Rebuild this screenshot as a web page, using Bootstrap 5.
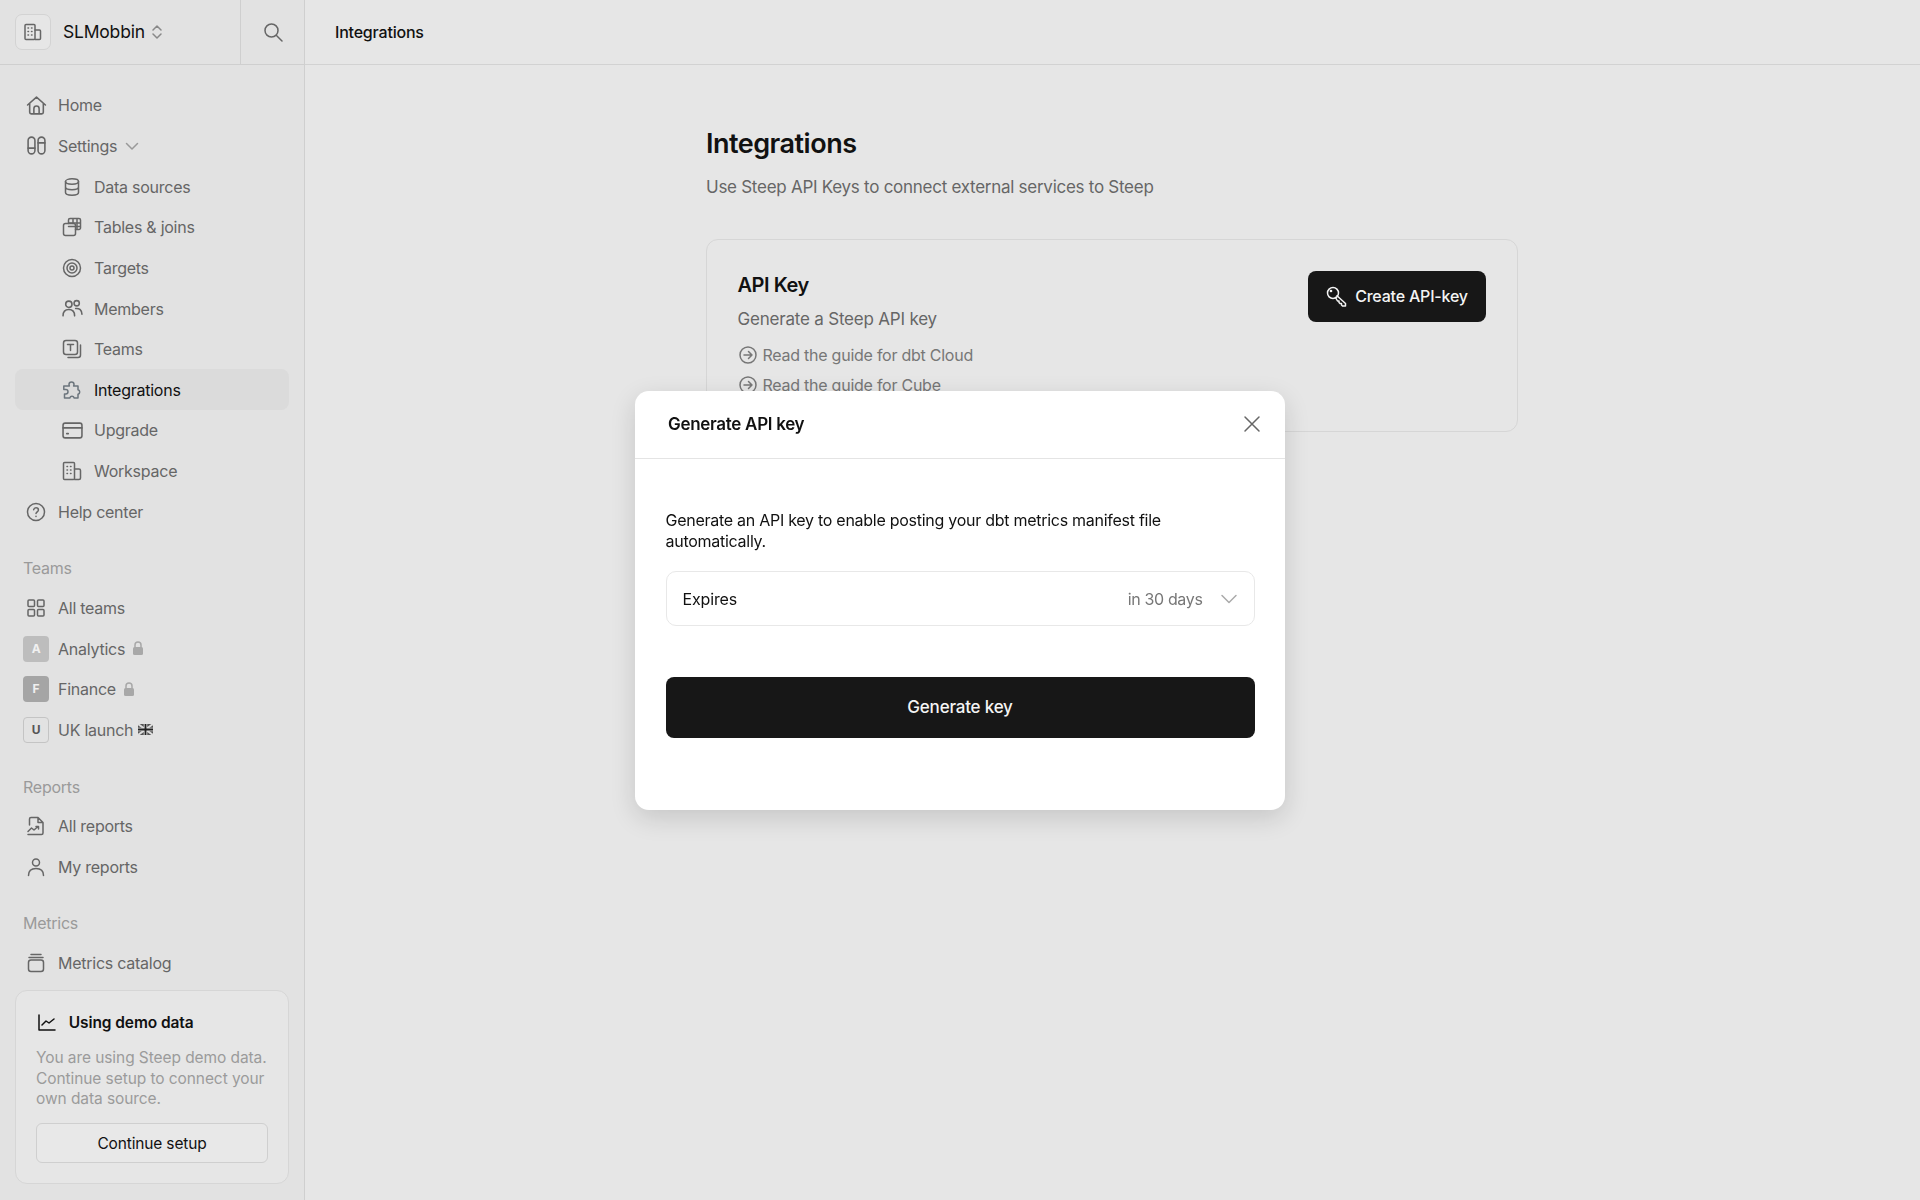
<!DOCTYPE html>
<html lang="en">
<head>
  <meta charset="UTF-8">
  <meta name="viewport" content="width=device-width, initial-scale=1">
  <title>Integrations</title>
  <link href="https://cdn.jsdelivr.net/npm/bootstrap@5.3.3/dist/css/bootstrap.min.css" rel="stylesheet">
  <style>
    body { font-family: Inter, "Liberation Sans", sans-serif; font-size: 16px; background: #e6e6e6; color: #111; height: 100vh; overflow: hidden; }
    svg { fill: none; stroke: currentColor; stroke-width: 1.5; stroke-linecap: round; stroke-linejoin: round; flex-shrink: 0; }

    .side { width: 305px; background: #e2e2e2; border-right: 1px solid #cfcfcf; height: 100vh; }
    .side-top { height: 65px; border-bottom: 1px solid #cfcfcf; }
    .org { width: 241px; padding-left: 15px; border-right: 1px solid #cfcfcf; }
    .org-logo { width: 36px; height: 36px; border: 1px solid #d3d3d3; border-radius: 7px; background: #e6e6e6; color: #666; }
    .org-name { font-size: 17.5px; letter-spacing: -.2px; margin-left: 12px; margin-right: 6px; }
    .search-btn { width: 63px; color: #666; }
    .stepper { color: #888; }

    .side-nav { padding: 20px 15px 0; }
    .nav-row { height: 40.65px; padding-left: 10px; color: #666; border-radius: 8px; text-decoration: none; letter-spacing: -.25px; }
    .nav-row.sub { padding-left: 46px; }
    .nav-row.on { background: #dbdbdb; color: #111; }
    .nav-ico { width: 22px; margin-right: 11px; }
    .nav-head { height: 40.65px; margin-top: 15px; padding: 2px 0 0 8px; color: #9a9a9a; letter-spacing: -.25px; }
    .tile { width: 26px; height: 26px; margin: 0 -2px; border-radius: 4px; font-size: 12px; font-weight: 700; color: #f0f0f0; }
    .tile-a { background: #bdbdbd; }
    .tile-f { background: #a5a5a5; }
    .tile-u { background: transparent; border: 1px solid #c4c4c4; color: #555; }
    .lock { color: #a8a8a8; margin-left: 7px; }
    .flag { margin-left: 5px; }

    .demo { margin: auto 15px 16px; height: 194px; padding: 20px; background: #e6e6e6; border: 1px solid #d6d6d6; border-radius: 12px; }
    .demo-title { font-weight: 600; font-size: 15.5px; letter-spacing: -.1px; }
    .demo-title svg { margin-left: 1px; }
    .demo-text { color: #9b9b9b; font-size: 15.5px; line-height: 20.4px; letter-spacing: -.08px; margin: 14px 0 14px; }
    .demo-btn { height: 40px; font-size: 15.5px; letter-spacing: -.15px; color: #111; background: #e8e8e8; border: 1px solid #cfcfcf; border-radius: 6px; }

    .main-top { height: 65px; border-bottom: 1px solid #d2d2d2; padding-left: 30px; font-weight: 500; letter-spacing: -.2px; }
    .main-wrap { width: 813px; margin: 0 auto; padding: 60px 1px 0 0; }
    .page-title { font-size: 27px; font-weight: 600; letter-spacing: -.5px; line-height: 38px; margin: 0; }
    .page-sub { font-size: 17px; color: #666; letter-spacing: -.27px; line-height: 24px; margin: 12px 0 0; }
    .api-box { height: 193px; margin-top: 40px; padding: 31px 31px 31px 30.5px; background: transparent; border: 1.5px solid #d6d6d6; border-radius: 12px; }
    .api-title { font-size: 20px; font-weight: 600; letter-spacing: -.45px; line-height: 28px; margin: 0; }
    .api-sub { font-size: 17px; color: #666; letter-spacing: -.2px; line-height: 24px; margin: 8px 0 9px; }
    .guide { color: #777; height: 30px; font-size: 16px; letter-spacing: -.25px; }
    .guide svg { margin-right: 6px; margin-left: 1px; }
    .key-btn { height: 51px; width: 178px; padding-bottom: 2px; background: #171717; color: #f4f4f4; border: 0; border-radius: 8px; font-size: 16px; font-weight: 500; letter-spacing: -.2px; }

    .modal.shown { display: block; }
    .key-dialog { max-width: 650px; margin: 0 auto; min-height: 100vh; }
    .key-modal { height: 419px; border: 0; border-radius: 14px; box-shadow: 0 8px 26px rgba(0, 0, 0, .14); }
    .key-head { height: 68px; padding: 0 24px 0 33px; border-bottom: 1px solid #e4e4e4; }
    .key-title { font-size: 17px; font-weight: 600; letter-spacing: -.3px; margin: 0; padding-top: 1px; }
    .key-close { color: #666; }
    .key-body { padding: 51.5px 30.5px 0; }
    .key-text { line-height: 20.5px; letter-spacing: -.27px; margin: 0 0 20px; }
    .expire { height: 55px; padding: 0 16px; border: 1.5px solid #e8e8e8; border-radius: 10px; letter-spacing: -.15px; }
    .expire-val { color: #777; margin-right: 17px; letter-spacing: -.35px; }
    .expire svg { color: #aaa; }
    .gen-btn { height: 61px; margin-top: 51px; padding: 0; background: #171717; color: #f4f4f4; border: 0; border-radius: 8px; font-size: 17px; font-weight: 500; letter-spacing: -.2px; }
  </style>
</head>
<body>
  <div class="d-flex">
    <!-- Sidebar -->
    <aside class="side d-flex flex-column flex-shrink-0">
      <div class="side-top d-flex">
        <div class="org d-flex align-items-center">
          <div class="org-logo d-flex align-items-center justify-content-center">
            <svg width="20" height="20" viewBox="0 0 20 20" stroke-width="1.3"><rect x="2" y="2.500" width="10" height="15" rx="1"/><path d="M12 8h4.500a1 1 0 0 1 1 1v7.500a1 1 0 0 1-1 1H12M5 6h.5M8.500 6H9M5 9.500h.5M8.500 9.500H9M5 13h.5M8.500 13H9"/></svg>
          </div>
          <span class="org-name">SLMobbin</span>
          <svg class="stepper" width="12" height="18" viewBox="0 0 12 18"><path d="M2 7l4-4 4 4M2 11l4 4 4-4"/></svg>
        </div>
        <div class="search-btn d-flex align-items-center justify-content-center">
          <svg width="20" height="20" viewBox="0 0 20 20"><circle cx="8.500" cy="8.500" r="6.500"/><path d="M13.500 13.500L19 19"/></svg>
        </div>
      </div>

      <nav class="side-nav d-flex flex-column">
        <a class="nav-row d-flex align-items-center" href="#"><span class="nav-ico d-flex justify-content-center"><svg width="21" height="21" viewBox="0 0 20 20"><path d="M1.500 9.500L10 2l8.500 7.500M3.500 8v8.500a1.500 1.500 0 0 0 1.500 1.500h10a1.500 1.500 0 0 0 1.500-1.500V8M7.500 18v-5a2.500 2.500 0 0 1 5 0v5"/></svg></span>Home</a>
        <a class="nav-row d-flex align-items-center" href="#"><span class="nav-ico d-flex justify-content-center"><svg width="21" height="21" viewBox="0 0 20 20"><rect x="2" y="2" width="6.500" height="16" rx="3.250"/><rect x="11.500" y="2" width="6.500" height="16" rx="3.250"/><path d="M2 12.500h6.500M11.500 7.500H18"/></svg></span>Settings<svg class="ms-2" width="14" height="14" viewBox="0 0 14 14"><path d="M1.500 4.500L7 10l5.500-5.500" stroke="#999"/></svg></a>
        <a class="nav-row sub d-flex align-items-center" href="#"><span class="nav-ico d-flex justify-content-center"><svg width="20" height="20" viewBox="0 0 20 20"><ellipse cx="10" cy="4.500" rx="6.500" ry="2.700"/><path d="M3.500 4.500v11c0 1.500 3 2.700 6.500 2.700s6.500-1.200 6.500-2.700v-11M3.500 10c0 1.500 3 2.700 6.500 2.700s6.500-1.200 6.500-2.700"/></svg></span>Data sources</a>
        <a class="nav-row sub d-flex align-items-center" href="#"><span class="nav-ico d-flex justify-content-center"><svg width="20" height="20" viewBox="0 0 20 20" stroke-width="1.400"><path d="M6.500 6.500V3a1.500 1.500 0 0 1 1.500-1.500h9A1.500 1.500 0 0 1 18.500 3v8a1.500 1.500 0 0 1-1.500 1.500h-3.500M6.500 6h12M6.500 9.500h12M11 1.500v5M15 1.500v11"/><rect x="1.500" y="6.500" width="12" height="12" rx="2"/></svg></span>Tables &amp; joins</a>
        <a class="nav-row sub d-flex align-items-center" href="#"><span class="nav-ico d-flex justify-content-center"><svg width="20" height="20" viewBox="0 0 20 20"><circle cx="10" cy="10" r="8.500"/><circle cx="10" cy="10" r="5"/><circle cx="10" cy="10" r="2"/></svg></span>Targets</a>
        <a class="nav-row sub d-flex align-items-center" href="#"><span class="nav-ico d-flex justify-content-center"><svg width="21" height="21" viewBox="0 0 20 20"><circle cx="6.500" cy="6" r="3"/><circle cx="14" cy="5" r="2.500"/><path d="M1 17c0-4 2.500-6 5.500-6s5.500 2 5.500 6M13 10c3.500-.5 6 1.500 6 5.500"/></svg></span>Members</a>
        <a class="nav-row sub d-flex align-items-center" href="#"><span class="nav-ico d-flex justify-content-center"><svg width="20" height="20" viewBox="0 0 20 20" stroke-width="1.400"><rect x="1.500" y="1.500" width="14" height="14" rx="2.500"/><path d="M18.500 6v10a2.500 2.500 0 0 1-2.500 2.500H6M5.500 5.500h6M8.500 5.500v6"/></svg></span>Teams</a>
        <a class="nav-row sub on d-flex align-items-center" href="#"><span class="nav-ico d-flex justify-content-center text-secondary"><svg width="20" height="20" viewBox="0 0 20 20" stroke-width="1.400"><path d="M7 4.500a2.500 2.500 0 0 1 5 0c0 .5-.2 1-.4 1.500H16v3.700a2.400 2.400 0 0 1 0 4.600V18h-3.800a2.300 2.300 0 0 0-4.400 0H2.500v-4h1.300a2.200 2.200 0 0 0 0-4.400H1.800V6h5.600C7.200 5.500 7 5 7 4.500z"/></svg></span>Integrations</a>
        <a class="nav-row sub d-flex align-items-center" href="#"><span class="nav-ico d-flex justify-content-center"><svg width="21" height="21" viewBox="0 0 20 20"><rect x="1" y="3" width="18" height="14" rx="2"/><path d="M1 7.500h18M4.500 13h1.500"/></svg></span>Upgrade</a>
        <a class="nav-row sub d-flex align-items-center" href="#"><span class="nav-ico d-flex justify-content-center"><svg width="20" height="20" viewBox="0 0 20 20" stroke-width="1.400"><rect x="1.500" y="1.500" width="11" height="17" rx="1"/><path d="M12.500 8h4.500a1.500 1.500 0 0 1 1.500 1.500v7.500a1.500 1.500 0 0 1-1.500 1.500h-4.500M5 5.500h.5M8.500 5.500H9M5 9h.5M8.500 9H9M5 12.500h.5M8.500 12.500H9"/></svg></span>Workspace</a>
        <a class="nav-row d-flex align-items-center" href="#"><span class="nav-ico d-flex justify-content-center"><svg width="20" height="20" viewBox="0 0 20 20"><circle cx="10" cy="10" r="8.500"/><path d="M7.700 7.700A2.400 2.400 0 0 1 10 5.800c1.400 0 2.400.9 2.400 2.100 0 1.900-2.400 1.900-2.400 3.700M10 14.300v.2"/></svg></span>Help center</a>

        <div class="nav-head d-flex align-items-center">Teams</div>
        <a class="nav-row d-flex align-items-center" href="#"><span class="nav-ico d-flex justify-content-center"><svg width="20" height="20" viewBox="0 0 20 20"><rect x="2" y="2" width="6.500" height="6.500" rx="1"/><rect x="11.500" y="2" width="6.500" height="6.500" rx="1"/><rect x="2" y="11.500" width="6.500" height="6.500" rx="1"/><rect x="11.500" y="11.500" width="6.500" height="6.500" rx="1"/></svg></span>All teams</a>
        <a class="nav-row d-flex align-items-center" href="#"><span class="nav-ico d-flex justify-content-center"><span class="tile tile-a d-flex align-items-center justify-content-center flex-shrink-0">A</span></span>Analytics<svg class="lock" width="12" height="15" viewBox="0 0 12 15"><rect x="1" y="6" width="10" height="8" rx="1.500" fill="currentColor" stroke="none"/><path d="M3 6V4a3 3 0 0 1 6 0v2"/></svg></a>
        <a class="nav-row d-flex align-items-center" href="#"><span class="nav-ico d-flex justify-content-center"><span class="tile tile-f d-flex align-items-center justify-content-center flex-shrink-0">F</span></span>Finance<svg class="lock" width="12" height="15" viewBox="0 0 12 15"><rect x="1" y="6" width="10" height="8" rx="1.500" fill="currentColor" stroke="none"/><path d="M3 6V4a3 3 0 0 1 6 0v2"/></svg></a>
        <a class="nav-row d-flex align-items-center" href="#"><span class="nav-ico d-flex justify-content-center"><span class="tile tile-u d-flex align-items-center justify-content-center flex-shrink-0">U</span></span>UK launch<svg class="flag" width="15" height="11" viewBox="0 0 15 11" stroke-linecap="butt"><rect width="15" height="11" fill="#555" stroke="none"/><path d="M0 0l15 11M15 0L0 11" stroke="#ddd" stroke-width="2"/><path d="M7.500 0v11M0 5.500h15" stroke="#ddd" stroke-width="3.500"/><path d="M7.500 0v11M0 5.500h15" stroke="#222" stroke-width="1.800"/></svg></a>

        <div class="nav-head d-flex align-items-center">Reports</div>
        <a class="nav-row d-flex align-items-center" href="#"><span class="nav-ico d-flex justify-content-center"><svg width="20" height="20" viewBox="0 0 20 20" stroke-width="1.400"><path d="M3.500 9V3a1.500 1.500 0 0 1 1.500-1.500h7l5 5V17a1.500 1.500 0 0 1-1.500 1.500H2M12 1.500V6.500h5M2 15.500l3.500-3.500 2.500 2 4-3.500M10 10.500h2.500V13"/></svg></span>All reports</a>
        <a class="nav-row d-flex align-items-center" href="#"><span class="nav-ico d-flex justify-content-center"><svg width="20" height="20" viewBox="0 0 20 20"><circle cx="10" cy="5.500" r="3.500"/><path d="M2.500 18.500c0-4.500 3-7 7.500-7s7.500 2.500 7.500 7"/></svg></span>My reports</a>

        <div class="nav-head d-flex align-items-center">Metrics</div>
        <a class="nav-row d-flex align-items-center" href="#"><span class="nav-ico d-flex justify-content-center"><svg width="20" height="20" viewBox="0 0 20 20"><rect x="2.500" y="7" width="15" height="11.500" rx="2.500"/><path d="M3 4.500h14M5 1.500h10"/></svg></span>Metrics catalog</a>
      </nav>

      <div class="demo d-flex flex-column">
        <div class="demo-title d-flex align-items-center"><svg class="me-2" width="20" height="18" viewBox="0 0 20 18" stroke-width="1.400"><path d="M2 1v15h16M5 11l4-4 3 2 5-4"/></svg>&nbsp;Using demo data</div>
        <p class="demo-text">You are using Steep demo data. Continue setup to connect your own data source.</p>
        <button class="demo-btn w-100" type="button">Continue setup</button>
      </div>
    </aside>

    <!-- Main -->
    <main class="flex-grow-1">
      <div class="main-top d-flex align-items-center">Integrations</div>
      <div class="main-wrap">
        <h1 class="page-title">Integrations</h1>
        <p class="page-sub">Use Steep API Keys to connect external services to Steep</p>
        <div class="api-box d-flex justify-content-between align-items-start overflow-hidden">
          <div>
            <h2 class="api-title">API Key</h2>
            <p class="api-sub">Generate a Steep API key</p>
            <div class="guide d-flex align-items-center"><svg width="18" height="18" viewBox="0 0 18 18" stroke-width="1.300"><circle cx="9" cy="9" r="8"/><path d="M5 9h8M9.500 5.500L13 9l-3.500 3.500"/></svg>Read the guide for dbt Cloud</div>
            <div class="guide d-flex align-items-center"><svg width="18" height="18" viewBox="0 0 18 18" stroke-width="1.300"><circle cx="9" cy="9" r="8"/><path d="M5 9h8M9.500 5.500L13 9l-3.500 3.500"/></svg>Read the guide for Cube</div>
          </div>
          <button class="key-btn d-flex align-items-center justify-content-center" type="button"><svg class="me-2" width="21" height="21" viewBox="0 0 21 21" stroke-width="1.200"><circle cx="7" cy="7" r="5.500"/><circle cx="5" cy="5" r=".6"/><path d="M11 9.800l8.500 7.700v2.500h-3l-1-1v-1.500H14l-1-1v-1.500h-1.500L9.500 11.500"/></svg>Create API-key</button>
        </div>
      </div>
    </main>
  </div>

  <!-- Modal -->
  <div class="modal shown" tabindex="-1">
    <div class="modal-dialog modal-dialog-centered key-dialog">
      <div class="modal-content key-modal">
        <div class="modal-header key-head">
          <h5 class="key-title">Generate API key</h5>
          <svg class="key-close ms-auto" width="18" height="18" viewBox="0 0 18 18"><path d="M2 2l14 14M16 2L2 16"/></svg>
        </div>
        <div class="modal-body key-body">
          <p class="key-text">Generate an API key to enable posting your dbt metrics manifest file automatically.</p>
          <div class="expire d-flex align-items-center">
            <span class="me-auto">Expires</span>
            <span class="expire-val">in 30 days</span>
            <svg width="18" height="12" viewBox="0 0 18 12"><path d="M2 2.500l7 7 7-7"/></svg>
          </div>
          <button class="gen-btn w-100" type="button">Generate key</button>
        </div>
      </div>
    </div>
  </div>

  <script src="https://cdn.jsdelivr.net/npm/bootstrap@5.3.3/dist/js/bootstrap.bundle.min.js"></script>
</body>
</html>
